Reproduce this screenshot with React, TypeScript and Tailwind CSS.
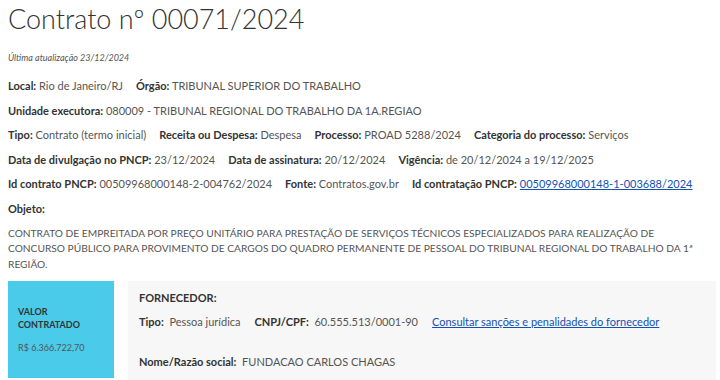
import React from "react";

const L = ({ label, children }: { label: string; children: React.ReactNode }) => (
  <span className="whitespace-nowrap">
    <b className="font-bold text-[#333]">{label}</b> <span className="text-[#555]">{children}</span>
  </span>
);

export default function App() {
  return (
    <div className="w-[720px] h-[380px] overflow-hidden bg-white px-2 text-[11px] text-[#555]" style={{ fontFamily: "Lato, 'Open Sans', sans-serif" }}>
      <h1 className="pt-[1px] text-[27px] leading-[36px] font-light text-[#333]">Contrato nº 00071/2024</h1>
      <div className="mt-[14px] h-[14px] leading-[14px] italic text-[9px] text-[#555]">Última atualização 23/12/2024</div>
      <div className="mt-[9px] flex flex-col">
        <div className="flex h-[24.6px] items-center gap-x-[13px]">
          <L label="Local:">Rio de Janeiro/RJ</L>
          <L label="Órgão:">TRIBUNAL SUPERIOR DO TRABALHO</L>
        </div>
        <div className="flex h-[24.6px] items-center gap-x-[13px]">
          <L label="Unidade executora:">080009 - TRIBUNAL REGIONAL DO TRABALHO DA 1A.REGIAO</L>
        </div>
        <div className="flex h-[24.6px] items-center gap-x-[13px]">
          <L label="Tipo:">Contrato (termo inicial)</L>
          <L label="Receita ou Despesa:">Despesa</L>
          <L label="Processo:">PROAD 5288/2024</L>
          <L label="Categoria do processo:">Serviços</L>
        </div>
        <div className="flex h-[24.6px] items-center gap-x-[13px]">
          <L label="Data de divulgação no PNCP:">23/12/2024</L>
          <L label="Data de assinatura:">20/12/2024</L>
          <L label="Vigência:">de 20/12/2024 a 19/12/2025</L>
        </div>
        <div className="flex h-[24.6px] items-center gap-x-[13px]">
          <L label="Id contrato PNCP:">00509968000148-2-004762/2024</L>
          <L label="Fonte:">Contratos.gov.br</L>
          <span className="whitespace-nowrap">
            <b className="font-bold text-[#333]">Id contratação PNCP:</b>{" "}
            <a className="text-[#1351b4] underline">00509968000148-1-003688/2024</a>
          </span>
        </div>
        <div className="flex h-[24.6px] items-center">
          <b className="font-bold text-[#333]">Objeto:</b>
        </div>
      </div>
      <p className="mt-[4px] text-[10.2px] leading-[15.5px] text-[#555]">
        CONTRATO DE EMPREITADA POR PREÇO UNITÁRIO PARA PRESTAÇÃO DE SERVIÇOS TÉCNICOS ESPECIALIZADOS PARA REALIZAÇÃO DE CONCURSO PÚBLICO PARA PROVIMENTO DE CARGOS DO QUADRO PERMANENTE DE PESSOAL DO TRIBUNAL REGIONAL DO TRABALHO DA 1ª REGIÃO.
      </p>
      <div className="mt-[9px] mr-[-4px] flex gap-[14px]">
        <div className="w-[106px] h-[97px] shrink-0 bg-[#4acbea] px-[10px] pt-[24px]">
          <div className="font-bold text-[9px] leading-[13px] text-[#333]">VALOR<br />CONTRATADO</div>
          <div className="mt-[10px] text-[9px] leading-[13px] text-[#555]">R$ 6.366.722,70</div>
        </div>
        <div className="flex-1 h-[100px] bg-[#f7f7f7] px-[11px] pt-[10px]">
          <div className="h-[14px] leading-[14px] font-bold text-[#333]">FORNECEDOR:</div>
          <div className="mt-[10px] flex h-[14px] items-center gap-x-[14px]">
            <span className="whitespace-nowrap"><b className="font-bold text-[#333]">Tipo:</b>&nbsp; <span>Pessoa jurídica</span></span>
            <span className="whitespace-nowrap"><b className="font-bold text-[#333]">CNPJ/CPF:</b>&nbsp; <span>60.555.513/0001-90</span></span>
            <a className="text-[#1351b4] underline whitespace-nowrap">Consultar sanções e penalidades do fornecedor</a>
          </div>
          <div className="mt-[26px] h-[14px] leading-[14px] whitespace-nowrap">
            <b className="font-bold text-[#333]">Nome/Razão social:</b>&nbsp; <span>FUNDACAO CARLOS CHAGAS</span>
          </div>
        </div>
      </div>
    </div>
  );
}
